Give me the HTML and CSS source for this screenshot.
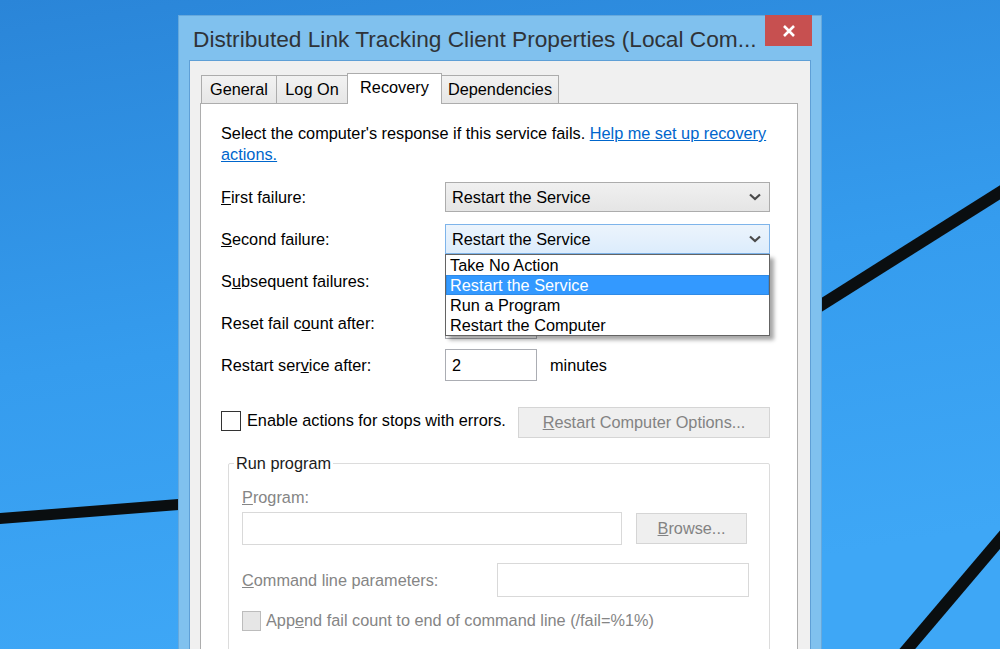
FILE: index.html
```html
<!DOCTYPE html>
<html lang="en">
<head>
    <meta charset="UTF-8">
    <title>Distributed Link Tracking Client Properties</title>
    <link rel="stylesheet" href="styles.css">
</head>
<body>
    <!-- desktop wallpaper -->
    <svg class="wallpaper" viewBox="0 0 1000 649" preserveAspectRatio="none">
        <defs>
            <linearGradient id="sky" x1="0" y1="0" x2="0.25" y2="1">
                <stop offset="0" stop-color="#2a85d8"/>
                <stop offset="0.55" stop-color="#359cee"/>
                <stop offset="1" stop-color="#3ea7f6"/>
            </linearGradient>
        </defs>
        <rect width="1000" height="649" fill="url(#sky)"/>
        <path d="M-5 519 L185 504" stroke="#0a0e10" stroke-width="11"/>
        <path d="M815 309 L1010 186" stroke="#0a0e10" stroke-width="12"/>
        <path d="M898 660 L1010 528" stroke="#0a0e10" stroke-width="12"/>
    </svg>

    <div class="window">
        <div class="titlebar">
            <span class="title">Distributed Link Tracking Client Properties (Local Com...</span>
            <span class="close">
                <svg width="14" height="12" viewBox="0 0 14 12">
                    <path d="M2 1 L12 11 M12 1 L2 11" stroke="#fff" stroke-width="2.6"/>
                </svg>
            </span>
        </div>

        <div class="client">
            <div class="tabs">
                <span class="tab tab-general">General</span>
                <span class="tab tab-logon">Log On</span>
                <span class="tab tab-recovery active">Recovery</span>
                <span class="tab tab-deps">Dependencies</span>
            </div>

            <div class="panel">
                <p class="intro">Select the computer's response if this service fails. <a href="#">Help me set up recovery<br>actions.</a></p>

                <div class="field">
                    <span class="label"><u>F</u>irst failure:</span>
                    <div class="combo">
                        <span>Restart the Service</span>
                        <svg class="chevron" width="12" height="8" viewBox="0 0 12 8"><path d="M1 1.5 L6 6 L11 1.5" fill="none" stroke="#4a4a4a" stroke-width="2.2"/></svg>
                    </div>
                </div>

                <div class="field">
                    <span class="label"><u>S</u>econd failure:</span>
                    <div class="combo focused">
                        <span>Restart the Service</span>
                        <svg class="chevron" width="12" height="8" viewBox="0 0 12 8"><path d="M1 1.5 L6 6 L11 1.5" fill="none" stroke="#4a4a4a" stroke-width="2.2"/></svg>
                        <ul class="dropdown">
                            <li>Take No Action</li>
                            <li class="selected">Restart the Service</li>
                            <li>Run a Program</li>
                            <li>Restart the Computer</li>
                        </ul>
                    </div>
                </div>

                <!-- these two controls sit under the open list -->
                <div class="field">
                    <span class="label">S<u>u</u>bsequent failures:</span>
                    <div class="combo"></div>
                </div>

                <div class="field">
                    <span class="label">Reset fail c<u>o</u>unt after:</span>
                    <div class="textbox short"></div>
                </div>

                <div class="field">
                    <span class="label">Restart ser<u>v</u>ice after:</span>
                    <div class="textbox short">2</div>
                    <span class="unit">minutes</span>
                </div>

                <div class="options">
                    <span class="checkbox"></span>
                    <span class="check-label">Enable actions for stops with errors.</span>
                    <span class="button wide"><u>R</u>estart Computer Options...</span>
                </div>

                <fieldset class="group">
                    <legend>Run program</legend>
                    <div class="muted"><u>P</u>rogram:</div>
                    <div class="program-row">
                        <div class="textbox disabled program"></div>
                        <span class="button browse"><u>B</u>rowse...</span>
                    </div>
                    <div class="params-row">
                        <span class="muted"><u>C</u>ommand line parameters:</span>
                        <div class="textbox disabled params"></div>
                    </div>
                    <div class="append-row">
                        <span class="checkbox disabled"></span>
                        <span class="muted">App<u>e</u>nd fail count to end of command line (/fail=%1%)</span>
                    </div>
                </fieldset>
            </div>
        </div>
    </div>
</body>
</html>
```

FILE: styles.css
```css
html, body {
    margin: 0;
    height: 649px;
    overflow: hidden;
}
body {
    position: relative;
    font-family: "Liberation Sans", Arial, sans-serif;
    font-size: 16.3px;
    color: #000;
}
.wallpaper {
    position: absolute;
    left: 0;
    top: 0;
    width: 1000px;
    height: 649px;
}

/* window frame */
.window {
    position: relative;
    margin: 15px 0 0 178px;
    width: 644px;
    height: 720px;
    box-sizing: border-box;
    background-color: #80c1ee;
    border: 1px solid #67a9dc;
}
.titlebar {
    display: flex;
    align-items: flex-start;
    height: 44px;
}
.title {
    margin: 10px 0 0 14px;
    font-size: 22.7px;
    line-height: 26px;
    color: #2f3338;
    white-space: nowrap;
}
.close {
    display: flex;
    align-items: center;
    justify-content: center;
    margin: -1px 9px 0 auto;
    width: 47px;
    height: 31px;
    background-color: #c75050;
}
.client {
    margin: 0 10px;
    height: 680px;
    background-color: #f0f0f0;
    border: 1px solid #5e9fd6;
}

/* tabs */
.tabs {
    display: flex;
    align-items: flex-end;
    margin-top: 12px;
    padding-left: 11px;
    position: relative;
    z-index: 1;
}
.tab {
    box-sizing: border-box;
    height: 28px;
    line-height: 27px;
    text-align: center;
    border: 1px solid #acacac;
    border-bottom: none;
    background: linear-gradient(#f2f2f2, #e6e6e6);
    margin-right: -1px;
}
.tab-general { width: 76px; }
.tab-logon { width: 72px; }
.tab-recovery { width: 95px; }
.tab-deps { width: 118px; }
.tab.active {
    height: 31px;
    line-height: 27px;
    background: #fff;
    margin-bottom: -1px;
    position: relative;
    z-index: 2;
}

/* panel */
.panel {
    margin: 0 12px 0 10px;
    height: 640px;
    box-sizing: border-box;
    background-color: #fff;
    border: 1px solid #adadad;
    padding: 19px 27px 0 20px;
}
.intro {
    margin: 0 0 17px;
    line-height: 21px;
}
.intro a {
    color: #0066cc;
}
.field {
    display: flex;
    align-items: center;
    height: 30px;
    margin-bottom: 12px;
}
.label {
    width: 224px;
    flex: none;
}
.combo {
    position: relative;
    display: flex;
    align-items: center;
    width: 325px;
    height: 30px;
    box-sizing: border-box;
    padding-left: 6px;
    border: 1px solid #acacac;
    background: linear-gradient(#f0f0f0, #e5e5e5);
}
.combo.focused {
    border-color: #7eb4ea;
    background: linear-gradient(#ecf4fc, #dcecfc);
}
.chevron {
    margin-left: auto;
    margin-right: 8px;
}
.dropdown {
    position: absolute;
    top: 100%;
    left: -1px;
    right: -1px;
    margin: 1px 0 0;
    padding: 0;
    list-style: none;
    background: #fff;
    border: 1px solid #646464;
    box-shadow: 4px 4px 4px rgba(0, 0, 0, 0.35);
    z-index: 5;
}
.dropdown li {
    height: 20px;
    line-height: 20px;
    padding-left: 4px;
}
.dropdown li.selected {
    background-color: #3399ff;
    color: #fff;
    box-shadow: inset 0 0 0 1px #2f8ae6;
}
.textbox {
    box-sizing: border-box;
    background: #fff;
    border: 1px solid #abadb3;
    padding-left: 6px;
    line-height: 30px;
    flex: none;
}
.textbox.short {
    width: 92px;
    height: 32px;
}
.unit {
    margin-left: 13px;
}

/* stop actions */
.options {
    display: flex;
    align-items: center;
    margin-top: 27px;
    height: 31px;
}
.checkbox {
    width: 20px;
    height: 20px;
    box-sizing: border-box;
    border: 1px solid #333;
    background: #fff;
    margin-top: -4px;
    flex: none;
}
.checkbox.disabled {
    width: 19px;
    height: 20px;
    border-color: #bcbcbc;
    background: #e6e6e6;
    margin-top: 0;
}
.check-label {
    margin-left: 6px;
    margin-top: -4px;
}
.button {
    display: flex;
    align-items: center;
    justify-content: center;
    box-sizing: border-box;
    background: #efefef;
    border: 1px solid #d5d5d5;
    color: #838383;
}
.button.wide {
    margin-left: auto;
    width: 252px;
    height: 31px;
}

/* run program group */
.group {
    margin: 15px 0 0 7px;
    padding: 13px 20px 40px 13px;
    border: 1px solid #dcdcdc;
    border-radius: 2px;
}
.group legend {
    margin-left: -8px;
    padding: 0 2px;
    line-height: 21px;
    color: #1b1b1b;
}
.muted {
    color: #858585;
    line-height: 21px;
}
.program-row {
    display: flex;
    align-items: center;
    margin-top: 4px;
}
.textbox.disabled {
    border-color: #d9d9d9;
}
.textbox.program {
    width: 380px;
    height: 33px;
}
.button.browse {
    margin-left: 14px;
    width: 111px;
    height: 31px;
}
.params-row {
    display: flex;
    align-items: center;
    margin-top: 18px;
}
.textbox.params {
    margin-left: auto;
    width: 252px;
    height: 34px;
}
.append-row {
    display: flex;
    align-items: center;
    gap: 5px;
    margin-top: 13px;
}
```
